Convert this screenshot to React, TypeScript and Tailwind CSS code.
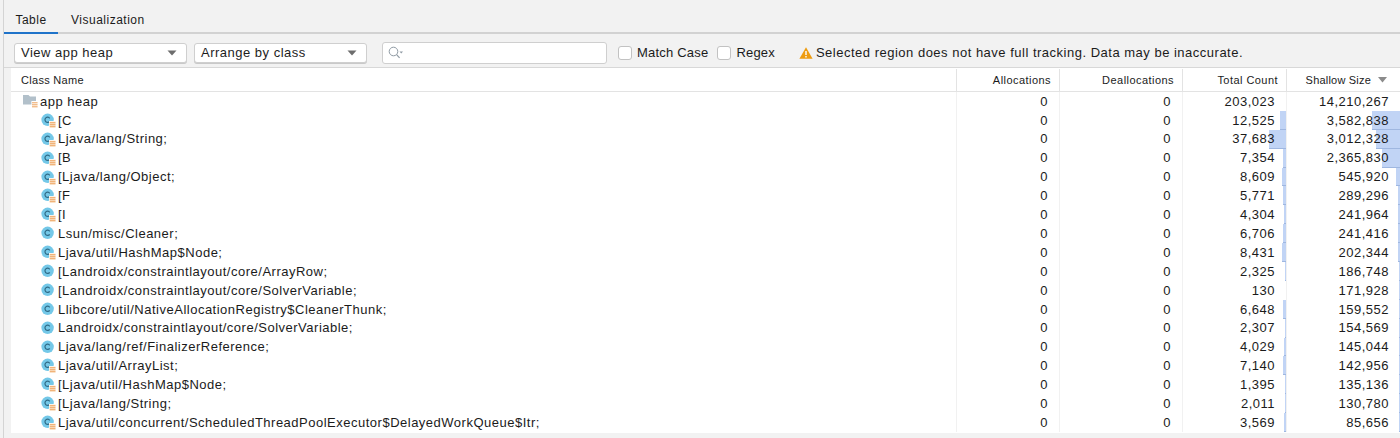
const rows: [string, number, number, boolean][] = [
  ["[C", 12525, 3582838, true],
  ["Ljava/lang/String;", 37683, 3012328, true],
  ["[B", 7354, 2365830, true],
  ["[Ljava/lang/Object;", 8609, 545920, true],
  ["[F", 5771, 289296, true],
  ["[I", 4304, 241964, true],
  ["Lsun/misc/Cleaner;", 6706, 241416, false],
  ["Ljava/util/HashMap$Node;", 8431, 202344, true],
  ["[Landroidx/constraintlayout/core/ArrayRow;", 2325, 186748, false],
  ["[Landroidx/constraintlayout/core/SolverVariable;", 130, 171928, false],
  ["Llibcore/util/NativeAllocationRegistry$CleanerThunk;", 6648, 159552, false],
  ["Landroidx/constraintlayout/core/SolverVariable;", 2307, 154569, false],
  ["Ljava/lang/ref/FinalizerReference;", 4029, 145044, false],
  ["Ljava/util/ArrayList;", 7140, 142956, true],
  ["[Ljava/util/HashMap$Node;", 1395, 135136, true],
  ["[Ljava/lang/String;", 2011, 130780, true],
  ["Ljava/util/concurrent/ScheduledThreadPoolExecutor$DelayedWorkQueue$Itr;", 3569, 85656, true],
];

const fmt = (n: number) => n.toLocaleString("en-US");

function ClassIcon({ badge }: { badge: boolean }) {
  return (
    <svg width="15" height="15" viewBox="0 0 15 15" className="shrink-0">
      <circle cx="6.6" cy="6.8" r="6.2" fill="#74c8e8" />
      <path d="M8.7 5.3A2.6 2.6 0 1 0 8.7 8.3" fill="none" stroke="#2f6a86" strokeWidth="1.2" />
      {badge && (
        <g>
          <rect x="8" y="8" width="7" height="7" fill="#ffffff" />
          <rect x="8.6" y="8.6" width="6" height="6" fill="#fbe3c8" />
          <path d="M8.8 9.7H14.4M8.8 11.7H14.4M8.8 13.7H14.4" stroke="#eda25c" strokeWidth="0.9" />
        </g>
      )}
    </svg>
  );
}

function Chevron() {
  return (
    <svg width="10" height="6" viewBox="0 0 10 6" className="shrink-0">
      <path d="M0.5 0.5H9.5L5 5.5Z" fill="#6d6d6d" />
    </svg>
  );
}

function Select({ label }: { label: string }) {
  return (
    <div className="flex h-[20px] w-[173px] items-center justify-between rounded-[3px] border border-[#cfcfcf] bg-white pl-[6px] pr-[9px] text-[#1d1d1d] shadow-[0_1px_0_#c9c9c9]">
      <span>{label}</span>
      <Chevron />
    </div>
  );
}

function Check({ label }: { label: string }) {
  return (
    <div className="flex items-center gap-[5px]">
      <span className="h-[14px] w-[14px] rounded-[3px] border border-[#c2c2c2] bg-white" />
      <span className="tracking-[0.2px]">{label}</span>
    </div>
  );
}

function Header({ label, width, sort }: { label: string; width: string; sort?: boolean }) {
  return (
    <div className={`flex h-full shrink-0 items-center justify-end border-l border-[#e3e3e3] ${width} ${sort ? "pr-[13px] tracking-[0.2px]" : "pr-[8px]"}`}>
      <span>{label}</span>
      {sort && (
        <svg width="9" height="6" viewBox="0 0 9 6" className="ml-[7px]">
          <path d="M0 0H9L4.5 5.5Z" fill="#8b8b8b" />
        </svg>
      )}
    </div>
  );
}

function Cell({ value, width, bar }: { value: string; width: string; bar?: number }) {
  return (
    <div className={`relative flex h-full shrink-0 items-center justify-end border-l border-[#f1f1f1] pr-[11px] ${width}`}>
      {bar !== undefined && (
        <span
          className="absolute bottom-0 right-0 top-0 border-b border-[#9fb7e0] bg-[#c1d4f5]"
          style={{ width: `${bar}px` }}
        />
      )}
      <span className="relative">{value}</span>
    </div>
  );
}

function Numbers({ alloc, total, shallow, totalBar, shallowBar }: { alloc: string; total: string; shallow: string; totalBar?: number; shallowBar?: number }) {
  return (
    <>
      <Cell value={alloc} width="w-[103px]" />
      <Cell value={alloc} width="w-[123px]" />
      <Cell value={total} width="w-[104px]" bar={totalBar} />
      <Cell value={shallow} width="w-[114px]" bar={shallowBar} />
    </>
  );
}

export default function App() {
  return (
    <div className="flex h-[438px] w-[1400px] overflow-hidden bg-[#f2f2f2] pl-[3px] font-['Liberation_Sans',sans-serif] text-[13px] tracking-[0.5px] text-[#1b1b1b]">
      <div className="flex min-w-0 flex-1 flex-col border-l border-[#d4d4d4]">
        <div className="flex h-[34px] shrink-0 items-end border-b-2 border-[#d2d2d2]">
          <div className="-mb-[2px] flex h-[24px] w-[54px] items-start justify-center border-b-2 border-[#1f73c9] pt-[1px] text-[12px]">Table</div>
          <div className="-mb-[2px] flex h-[24px] items-start pl-[13px] pt-[1px] text-[12px]">Visualization</div>
        </div>
        <div className="flex h-[34px] shrink-0 items-center border-b border-[#d8d8d8] pl-[10px] pt-[4px]">
          <div className="flex gap-[7px]">
            <Select label="View app heap" />
            <Select label="Arrange by class" />
          </div>
          <div className="ml-[15px] flex h-[22px] w-[225px] items-center rounded-[3px] border border-[#cfcfcf] bg-white pl-[5px]">
            <svg width="16" height="13" viewBox="0 0 16 13" fill="none">
              <circle cx="5.5" cy="5.5" r="4.3" stroke="#8f9aa3" strokeWidth="1" />
              <path d="M8.6 8.6L11.6 11.8" stroke="#8f9aa3" strokeWidth="1.2" />
              <path d="M11.5 5.5H15L13.25 7.5Z" fill="#8f9aa3" />
            </svg>
          </div>
          <div className="ml-[11px] flex gap-[9px]">
            <Check label="Match Case" />
            <Check label="Regex" />
          </div>
          <svg width="14" height="12" viewBox="0 0 14 12" className="ml-[24px]">
            <path d="M7 0.3L13.6 11.7H0.4Z" fill="#ee9c10" />
            <path d="M6.3 4H7.7V8H6.3ZM6.3 9H7.7V10.4H6.3Z" fill="#ffffff" />
          </svg>
          <span className="ml-[3px]">Selected region does not have full tracking. Data may be inaccurate.</span>
        </div>
        <div className="ml-[7px] flex h-[365px] shrink-0 flex-col bg-white">
          <div className="flex h-[24px] shrink-0 items-center border-b border-[#e3e3e3] pt-[1px] text-[11px] tracking-[0.45px]">
            <div className="min-w-0 flex-1 pl-[10px] tracking-[0.3px]">Class Name</div>
            <Header label="Allocations" width="w-[103px]" />
            <Header label="Deallocations" width="w-[123px]" />
            <Header label="Total Count" width="w-[104px]" />
            <Header label="Shallow Size" width="w-[114px]" sort />
          </div>
          <div className="flex h-[18.9px] items-center">
            <div className="flex min-w-0 flex-1 items-center pl-[12px]">
              <svg width="16" height="14" viewBox="0 0 16 14" className="shrink-0">
                <path d="M0 1H5.5L7 2.5H13V10.5H0Z" fill="#b2c0ca" />
                <rect x="8.4" y="7" width="6.6" height="7" fill="#ffffff" />
                <path d="M9 8.8H14.6M9 10.8H14.6M9 12.8H14.6" stroke="#eda25c" strokeWidth="1" />
              </svg>
              <span className="ml-[1px]">app heap</span>
            </div>
            <Numbers alloc="0" total="203,023" shallow="14,210,267" />
          </div>
          {rows.map(([name, total, shallow, badge]) => (
            <div key={name} className="flex h-[18.9px] items-center">
              <div className="flex min-w-0 flex-1 items-center pl-[30px]">
                <ClassIcon badge={badge} />
                <span className="ml-[2px] whitespace-nowrap">{name}</span>
              </div>
              <Numbers
                alloc="0"
                total={fmt(total)}
                shallow={fmt(shallow)}
                totalBar={(total / 37683) * 17}
                shallowBar={(shallow / 3582838) * 28}
              />
            </div>
          ))}
        </div>
      </div>
    </div>
  );
}
